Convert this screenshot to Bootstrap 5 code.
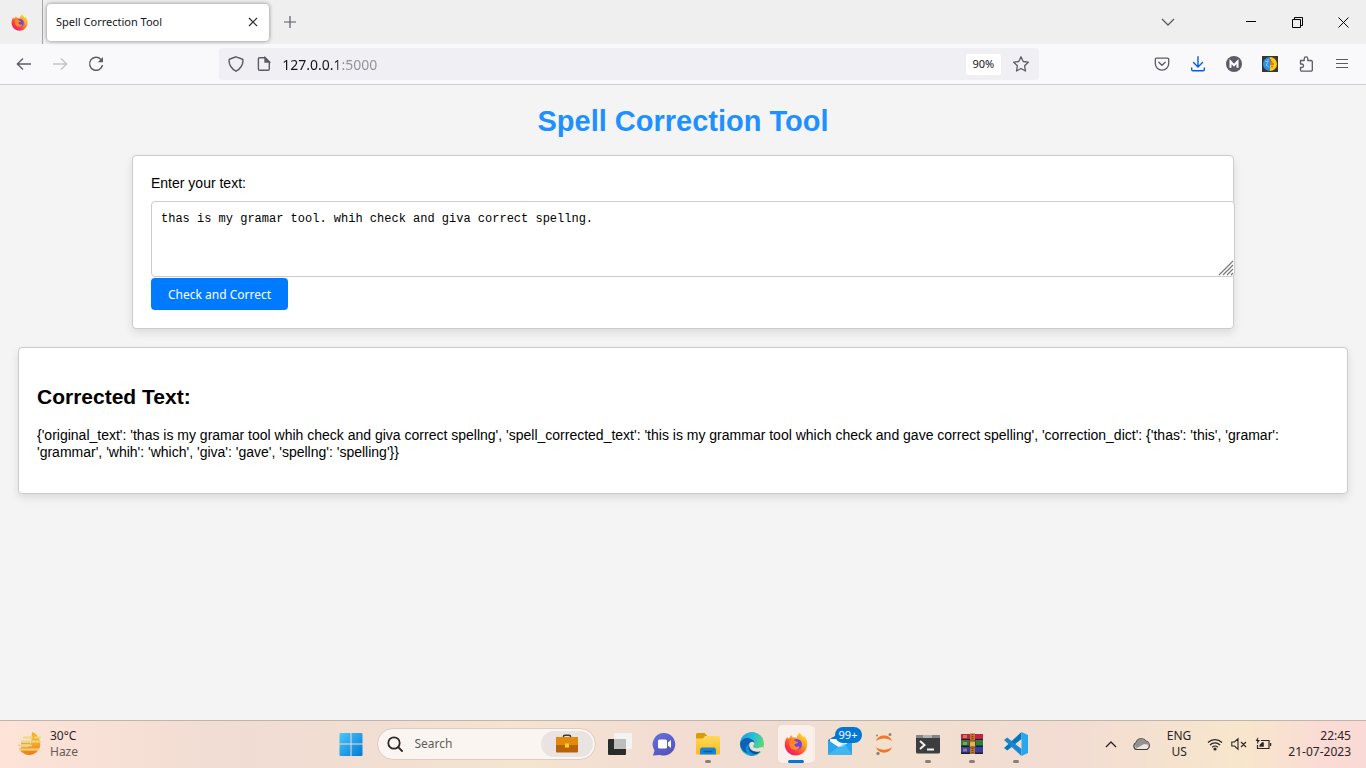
<!DOCTYPE html>
<html lang="en">
<head>
<meta charset="utf-8">
<meta name="viewport" content="width=device-width, initial-scale=1">
<title>Spell Correction Tool</title>
<link href="https://cdn.jsdelivr.net/npm/bootstrap@5.3.0/dist/css/bootstrap.min.css" rel="stylesheet">
<style>
  :root { --ui: "Noto Sans", "Open Sans", sans-serif; --page: "Liberation Sans", Arial, sans-serif; }
  body { font-family: var(--ui); font-size: 12px; line-height: 16px; color: #15141a; background: #f4f4f4; }
  svg { display: block; flex: none; }
  .plain { border: 0; background: none; padding: 0; color: inherit; display: flex; align-items: center; justify-content: center; flex: none; }

  /* browser chrome */
  .tab-strip { height: 44px; background: #efefef; }
  .pinned-tab { width: 43px; border-right: 1px solid #a5a5a8; height: 44px; padding-right: 3px; }
  .open-tab { width: 222px; height: 37px; margin: 0 6px 0 4px; padding: 0 9px; background: #fff; border-radius: 4px; box-shadow: 0 0 4px rgba(0,0,0,.45); font-size: 11px; color: #15141a; }
  .win-btn { width: 46px; height: 44px; }
  .tabs-btn { margin-right: 21px; }
  .tool-bar { height: 41px; padding: 0 6px; background: #f9f9fb; border-bottom: 1px solid #cccccf; color: #5b5b66; }
  .tool-btn { width: 36px; height: 36px; }
  .url-box { width: 60vw; height: 32px; background: #f0f0f4; border-radius: 4px; padding-left: 3px; }
  .url-btn { width: 28px; height: 32px; }
  .url-input { border: 0; outline: 0; padding: 0 0 0 4px; min-width: 0; font-size: 14px; height: 32px;
    background: linear-gradient(to right, #15141a 60px, #8f8f98 60px); -webkit-background-clip: text; background-clip: text; -webkit-text-fill-color: transparent; }
  .zoom-btn { width: 35px; height: 21px; background: #fff; border-radius: 3px; font-size: 11px; color: #15141a; margin-right: 6px; }

  /* web page */
  .web-page { font-family: var(--page); font-size: 14px; line-height: 17px; color: #000; padding: 19px 18px 18px; }
  .web-page h1 { font-size: 29px; line-height: 34px; font-weight: 700; color: #1e90ff; text-align: center; margin: 0 0 17px; }
  .web-page h2 { font-size: 21px; line-height: 25px; font-weight: 700; margin: 18px 0; }
  .web-page label { line-height: 18px; }
  .web-page p { margin: 0 0 14px; }
  .sheet { background: #fff; border: 1px solid #ccc; border-radius: 4px; box-shadow: 0 4px 8px rgba(0,0,0,.1); padding: 18px; }
  .entry-sheet { width: calc(80% + 38px); margin: 0 auto 18px; }
  .entry-area { width: calc(100% + 20px); margin: 9px 0 1px; }
  .entry-area textarea { display: block; width: 100%; height: 76px; padding: 9px; border: 1px solid #ccc; border-radius: 4px; font: 12px/16px "Liberation Mono", monospace; color: #000; resize: none; }
  .grip { right: 1px; bottom: 1px; pointer-events: none; }
  .check-btn { border: 0; border-radius: 4px; background: #007bff; color: #fff; width: 137px; height: 32px; padding: 2px 0 0; font: 12px/16px var(--ui); }

  /* taskbar */
  .task-bar { display: grid; grid-template-columns: 1fr auto 1fr; height: 48px; padding-bottom: 2px; border-top: 1px solid #bfb5ad; color: #2a2524;
    background: linear-gradient(to right, #fde3d8 0, #f0dcd3 18%, #f2dfd2 29%, #f5e4d0 38%, #f3ddd3 48%, #f1dcd2 58%, #f2e0cf 64%, #f2dcd3 78%, #f8e6cc 91%, #fadbd5 97%, #fadad6 100%); }
  .dock-btn { width: 44px; height: 45px; position: relative; }
  .dock-btn.running::after { content: ""; position: absolute; left: 19px; bottom: 3px; width: 6px; height: 3px; border-radius: 2px; background: #8a7d77; }
  .dock-btn.current::before { content: ""; position: absolute; left: 4px; top: 4px; width: 35px; height: 38px; border-radius: 4px; background: #faf0eb; box-shadow: 3px 0 0 -1px #f8eae4, 0 0 1px #cdbdb5; }
  .dock-btn.current::after { left: 14px; width: 16px; background: #0078d4; }
  .dock-btn svg { position: relative; }
  .count-badge { position: absolute; left: 17px; top: 6px; width: 27px; height: 16px; border-radius: 8px; background: #0078d4; color: #fff; font-size: 11px; }
  .search-box { width: 219px; height: 32px; margin: 0 2px 0 4px; padding: 0 2px 0 9px; border-radius: 16px; background: #fbf5f2; border: 1px solid #ddcbc4; }
  .search-box input { border: 0; outline: 0; background: none; min-width: 0; width: 100px; padding: 0; font-size: 12px; }
  .search-box input::placeholder { color: #5f5a58; opacity: 1; }
  .case-btn { width: 52px; height: 26px; border-radius: 13px; background: #e9e4e1; }
  .dim { color: #655c59; }
  .tray { gap: 12px; padding-right: 15px; }
</style>
</head>
<body class="d-flex flex-column min-vh-100">

<header>
  <div class="tab-strip d-flex align-items-center">
    <button class="plain pinned-tab" aria-label="Firefox View"><svg width="17" height="17" viewBox="0 0 24 24"><use href="#fox"/></svg></button>
    <div class="open-tab d-flex align-items-center justify-content-between">
      <span>Spell Correction Tool</span>
      <button class="plain" aria-label="Close tab"><svg width="14" height="14" viewBox="0 0 14 14" stroke="#2b2a33" stroke-width="1.2"><path d="M3 3l8 8M11 3l-8 8"/></svg></button>
    </div>
    <button class="plain" aria-label="New tab"><svg width="30" height="16" viewBox="0 0 30 16" stroke="#5b5b66" stroke-width="1.2"><path d="M15 2v12M9 8h12"/></svg></button>
    <button class="plain ms-auto win-btn tabs-btn" aria-label="List tabs"><svg width="14" height="14" viewBox="0 0 14 14" fill="none" stroke="#5b5b66" stroke-width="1.3"><path d="M1 4l6 6 6-6"/></svg></button>
    <button class="plain win-btn ms-3" aria-label="Minimize"><svg width="10" height="10" viewBox="0 0 10 10" stroke="#000"><path d="M0 4.500h10"/></svg></button>
    <button class="plain win-btn" aria-label="Restore"><svg width="11" height="11" viewBox="0 0 11 11" fill="none" stroke="#000"><path d="M.5 2.500h8v8h-8zM2.500 2.500v-2h8v8h-2"/></svg></button>
    <button class="plain win-btn" aria-label="Close"><svg width="11" height="11" viewBox="0 0 11 11" stroke="#000"><path d="M.5.5l10 10M10.500.5l-10 10"/></svg></button>
  </div>

  <nav class="tool-bar d-flex align-items-center" aria-label="Navigation">
    <button class="plain tool-btn" aria-label="Back"><svg width="16" height="16" viewBox="0 0 16 16" fill="none" stroke="currentColor" stroke-width="1.300"><path d="M15 8H1.500M7 2.500L1.300 8 7 13.500"/></svg></button>
    <button class="plain tool-btn" aria-label="Forward" disabled><svg width="16" height="16" viewBox="0 0 16 16" fill="none" stroke="#c3c3c8" stroke-width="1.300"><path d="M1 8h13.500M9 2.500l5.700 5.500L9 13.500"/></svg></button>
    <button class="plain tool-btn" aria-label="Reload"><svg width="16" height="16" viewBox="0 0 16 16" fill="none" stroke="currentColor" stroke-width="1.400"><path d="M13 3.500A6.500 6.500 0 1 0 14.500 9"/><path d="M15 1v5.200H9.800z" fill="currentColor" stroke="none"/></svg></button>
    <div class="flex-fill"></div>
    <div class="url-box d-flex align-items-center">
      <button class="plain url-btn" aria-label="Tracking protection"><svg width="16" height="16" viewBox="0 0 16 16" fill="none" stroke="currentColor" stroke-width="1.400"><path d="M8 .8l6 2.200c.8.300 1 .8 1 1.600C14.800 9.500 12 13 8 15.200 4 13 1.200 9.500 1 4.600 1 3.800 1.200 3.300 2 3z"/></svg></button>
      <button class="plain url-btn" aria-label="Site information"><svg width="16" height="16" viewBox="0 0 16 16" fill="none" stroke="currentColor" stroke-width="1.400"><path d="M3.700 1.700H9L13.300 6v7a1.300 1.300 0 0 1-1.300 1.300H3.700A1.300 1.300 0 0 1 2.400 13V3a1.300 1.300 0 0 1 1.300-1.300z"/><path d="M9 1.500V6h4.500z" fill="currentColor"/></svg></button>
      <input class="url-input flex-fill" type="text" aria-label="Address" value="127.0.0.1:5000">
      <button class="plain zoom-btn">90%</button>
      <button class="plain url-btn me-1" aria-label="Bookmark this page"><svg width="16" height="16" viewBox="0 0 16 16" fill="none" stroke="currentColor" stroke-width="1.300" stroke-linejoin="round"><path d="M8 .8l2.200 4.700 5.100.7-3.700 3.600.9 5.200L8 12.500 3.500 15l.9-5.200L.7 6.200l5.100-.7z"/></svg></button>
    </div>
    <div class="flex-fill"></div>
    <button class="plain tool-btn" aria-label="Save to Pocket"><svg width="16" height="16" viewBox="0 0 16 16" fill="none" stroke="currentColor" stroke-width="1.300" stroke-linecap="round"><path d="M2.500 2.200h11a1.200 1.200 0 0 1 1.200 1.200V7.500a6.700 6.700 0 0 1-13.400 0V3.400a1.200 1.200 0 0 1 1.200-1.200z"/><path d="M4.800 6.300L8 9.300l3.200-3"/></svg></button>
    <button class="plain tool-btn" aria-label="Downloads"><svg width="16" height="16" viewBox="0 0 16 16" fill="none" stroke="#0061e0" stroke-width="1.400" stroke-linecap="round"><path d="M8 .8V10.500M3.500 6.500L8 11l4.500-4.500M1.700 12v1.500c0 .8.500 1.300 1.300 1.300h10c.8 0 1.300-.5 1.300-1.300V12"/></svg></button>
    <button class="plain tool-btn" aria-label="Account"><svg width="16" height="16" viewBox="0 0 16 16"><circle cx="8" cy="8" r="8" fill="#5b5b66"/><path d="M4.500 11.800V5.500L8 9.300l3.500-3.800v6.300" fill="none" stroke="#fff" stroke-width="2"/></svg></button>
    <button class="plain tool-btn" aria-label="Extension"><svg width="16" height="16" viewBox="0 0 16 16"><path fill="#3c3431" d="M0 0h16v16H0z"/><path d="M8 1a7 7 0 0 0 0 14z" fill="#2f8fe0"/><path d="M8 1a7 7 0 0 1 0 14z" fill="#f6cb12"/><path d="M3 5l3 1-2 3 3 2M6 3v3" stroke="#85c9f5" fill="none"/><path d="M8.500 3v3h2M8 8h4M9 10.500h2" stroke="#d0651a" fill="none" stroke-width="1.300"/></svg></button>
    <button class="plain tool-btn" aria-label="Extensions"><svg width="16" height="16" viewBox="0 0 16 16" fill="none" stroke="currentColor" stroke-width="1.300" stroke-linejoin="round"><path d="M2.500 4.500h3.700V2.700a1.800 1.800 0 0 1 3.600 0v1.800h3.300a1.200 1.200 0 0 1 1.200 1.200v8.200a1.200 1.200 0 0 1-1.200 1.200H3.700a1.200 1.200 0 0 1-1.200-1.200v-2.400h1.300a1.700 1.700 0 0 0 0-3.500H2.500z"/></svg></button>
    <button class="plain tool-btn" aria-label="Menu"><svg width="16" height="16" viewBox="0 0 16 16" stroke="currentColor" stroke-width="1.200"><path d="M2 3.500h12M2 7.500h12M2 11.500h12"/></svg></button>
  </nav>
</header>

<main class="web-page flex-grow-1">
  <h1>Spell Correction Tool</h1>
  <form class="sheet entry-sheet" onsubmit="return false">
    <label class="d-block" for="entry">Enter your text:</label>
    <div class="entry-area position-relative">
      <textarea id="entry" spellcheck="false">thas is my gramar tool. whih check and giva correct spellng.</textarea>
      <svg class="grip position-absolute" width="16" height="16" viewBox="0 0 16 16" stroke="#77777c" stroke-width="1.200"><path d="M1 15L15 1M5 15L15 5M9 15l6-6M13 15l2-2"/></svg>
    </div>
    <button class="check-btn d-block" type="submit">Check and Correct</button>
  </form>
  <section class="sheet">
    <h2>Corrected Text:</h2>
    <p>{'original_text': 'thas is my gramar tool whih check and giva correct spellng', 'spell_corrected_text': 'this is my grammar tool which check and gave correct spelling', 'correction_dict': {'thas': 'this', 'gramar': 'grammar', 'whih': 'which', 'giva': 'gave', 'spellng': 'spelling'}}</p>
  </section>
</main>

<footer class="task-bar align-items-center">
  <button class="plain justify-content-start text-start ps-3 gap-2" aria-label="Weather">
    <svg width="26" height="24" viewBox="0 0 26 24"><path d="M16 0c5 2 8 6 8 11l-9 2z" fill="#f0b429"/><path d="M23.500 8a11 11 0 0 1-20.500 8C10 17 14 15 16 8z" fill="url(#gSun)"/><path d="M8 5.500h8M19 5.500h5M6 9.500h18M3 13.500h12M4 17.500h19" stroke="#f0d57c" stroke-width="2" stroke-linecap="round"/><path d="M5 11.500h9M5 15.500h7" stroke="#e6a83c" stroke-width="1.500"/></svg>
    <span class="d-block"><span class="d-block">30°C</span><span class="d-block dim">Haze</span></span>
  </button>

  <div class="d-flex align-items-center">
    <button class="plain dock-btn" aria-label="Start"><svg width="24" height="24" viewBox="0 0 24 24" fill="url(#gWin)"><path d="M.5 2a1 1 0 0 1 1-1h10v10.500H.5zM12.500 1h10a1 1 0 0 1 1 1v9.500h-11zM.5 12.500h11V24h-10a1 1 0 0 1-1-1zM12.500 12.500h11V23a1 1 0 0 1-1 1h-10z"/></svg></button>
    <div class="search-box d-flex align-items-center">
      <svg width="16" height="16" viewBox="0 0 16 16" fill="none" stroke="#2a2726" stroke-width="1.800" stroke-linecap="round"><circle cx="7" cy="7" r="5.700"/><path d="M11.200 11.200L15 15"/></svg>
      <input class="ms-2 ps-1 me-auto" type="text" placeholder="Search" aria-label="Search">
      <button class="plain case-btn" aria-label="Search highlights"><svg width="22" height="19" viewBox="0 0 22 19"><path d="M7.500 4V2.500c0-.8.500-1.300 1.300-1.300h4.400c.8 0 1.300.5 1.300 1.300V4" fill="none" stroke="#3b3b3f" stroke-width="1.600"/><rect y="3" width="22" height="15.500" rx="1" fill="#b96208"/><path d="M0 4a1 1 0 0 1 1-1h20a1 1 0 0 1 1 1v7H0z" fill="#e38a0d"/><path d="M9 9.500h4v4H9z" fill="#ffd321"/></svg></button>
    </div>
    <button class="plain dock-btn" aria-label="Task view"><svg width="24" height="24" viewBox="0 0 24 24"><rect x="0" y="7" width="18" height="16" rx="1" fill="#2b2b2b"/><rect x="6" y="1" width="18" height="16" rx="1" fill="#f3f3f3"/><path d="M6 7h12v10H6z" fill="#bdbdbd"/></svg></button>
    <button class="plain dock-btn" aria-label="Chat"><svg width="24" height="24" viewBox="0 0 24 24"><path d="M12 1a11.300 11.300 0 1 1-4 21.900L1 23.500l1.500-5A11.300 11.300 0 0 1 12 1z" fill="url(#gChat)"/><rect x="6" y="7.500" width="9" height="9" rx="1.500" fill="#fff"/><path d="M16 10.500l3-2.500v8l-3-2.500z" fill="#fff"/></svg></button>
    <button class="plain dock-btn running" aria-label="File Explorer"><svg width="24" height="24" viewBox="0 0 24 24"><path d="M0 2.500A1.500 1.500 0 0 1 1.500 1h7L11 3.500V8H0z" fill="#d89b0a"/><path d="M9 4h13.500A1.500 1.500 0 0 1 24 5.500V21a1.500 1.500 0 0 1-1.500 1.500h-21A1.500 1.500 0 0 1 0 21V6.500h7z" fill="url(#gFold)"/><path d="M4 22.500V18a2.500 2.500 0 0 1 2.500-2.500h11A2.500 2.500 0 0 1 20 18v4.500z" fill="#1384d6"/><path d="M7.500 19.500h9" stroke="#0c5c9f" stroke-width="1.500"/></svg></button>
    <button class="plain dock-btn" aria-label="Edge"><svg width="24" height="24" viewBox="0 0 24 24"><circle cx="12" cy="12" r="12" fill="url(#gEdge)"/><path d="M0 12C1 7 6 5 10 6.500c3 1 4.500 3 4.500 4.500-2-2-5-1-5.500 2-.6 5 4.500 8.500 11 6.500A12 12 0 0 1 0 12z" fill="#0d62b5"/><path d="M9.200 12c-1 5 4 9 11.200 7.100A12 12 0 0 1 11 24C4.500 21 4.500 14 9.200 12z" fill="#1490df"/><path d="M14 10.500c1 2-1 2.500-.8 4 .2 1.800 4.500 2.700 9.300.3l2 3-4 2.500C14 21 8.500 17 9.200 12.500c.5-2.500 3.300-3.500 4.800-2z" fill="#f3ddd3"/><path d="M20.500 19.200C13.500 21.500 8 17 9.200 12.300c-2 4 .3 8.700 5.300 9.700 2.500.3 4.600-1 6-2.800z" fill="#0b4f95"/></svg></button>
    <button class="plain dock-btn running current" aria-label="Firefox"><svg width="24" height="24" viewBox="0 0 24 24"><use href="#fox"/></svg></button>
    <button class="plain dock-btn" aria-label="Mail, 99+ unread"><svg width="24" height="24" viewBox="0 0 24 24"><path d="M0 8l12-7 12 7v14.500H0z" fill="#1273c4"/><path d="M2 7h20v8H2z" fill="#fff"/><path d="M0 8l12 8 12-8v14.500H0z" fill="#2aa4ec"/><path d="M0 22.500L16 11l8 11.500z" fill="#50c4f8" opacity=".6"/></svg><span class="count-badge">99+</span></button>
    <button class="plain dock-btn" aria-label="Jupyter"><svg width="24" height="24" viewBox="0 0 24 24"><path d="M4 9C6 1.500 18 1.500 20 9 16 5.500 8 5.500 4 9zM4 15c2 7.500 14 7.500 16 0-4 3.500-12 3.500-16 0z" fill="#f37726"/><g fill="#8b8583"><circle cx="18" cy="2.500" r="1.500"/><circle cx="5" cy="3.500" r="1"/><circle cx="6" cy="21.500" r="1.700"/></g></svg></button>
    <button class="plain dock-btn running" aria-label="Terminal"><svg width="24" height="24" viewBox="0 0 24 24"><rect y="3" width="24" height="18.500" rx="1.500" fill="#3d3d3f"/><path d="M0 4.500A1.500 1.500 0 0 1 1.500 3h21A1.500 1.500 0 0 1 24 4.500V6H0z" fill="#858587"/><path d="M7 3h9v3H7z" fill="#b1b1b3"/><path d="M4 9l4.500 4L4 17M11 17.500h7" fill="none" stroke="#f1f1f1" stroke-width="2"/></svg></button>
    <button class="plain dock-btn running" aria-label="WinRAR"><svg width="24" height="24" viewBox="0 0 24 24"><path d="M1 2h22v6H1z" fill="#bd2446"/><path d="M1 8.500h22v6H1z" fill="#25833c"/><path d="M1 15h22v6.500H1z" fill="#3341a0"/><path d="M1 7h22v1.500H1zM1 13.500h22V15H1zM1 20.500h22V22H1z" fill="#241a2e"/><path d="M4 3v3M6 3v3M4 10v3M6 10v3M4 16.500v3M6 16.500v3" stroke="#e6c35c"/><path d="M10 1.500h5V22h-5z" fill="#bb7430"/><rect x="9.500" y="9" width="6" height="6" fill="#e0b25a" stroke="#65401c"/><path d="M12.500 2v6M12.500 16v5" stroke="#774313" stroke-dasharray="1 1" stroke-width="2"/></svg></button>
    <button class="plain dock-btn running" aria-label="Visual Studio Code"><svg width="24" height="24" viewBox="0 0 24 24"><path d="M17.500 0v7L3.300 18.500 0 16z" fill="#0877b9"/><path d="M0 8l3.300-2.500L17.500 17v7z" fill="#1688d0"/><path d="M17.500 0L24 3v18l-6.500 3z" fill="#27a7ee"/></svg></button>
  </div>

  <div class="tray d-flex align-items-center justify-content-end">
    <button class="plain me-1" aria-label="Hidden icons"><svg width="12" height="12" viewBox="0 0 12 12" fill="none" stroke="#2a2524" stroke-width="1.300"><path d="M1 9l5-5 5 5"/></svg></button>
    <button class="plain me-1" aria-label="OneDrive"><svg width="18" height="16" viewBox="0 0 18 16"><path d="M4.500 13.500A3.500 3.500 0 0 1 3 6.800 5.500 5.500 0 0 1 12.700 5 4.600 4.600 0 0 1 14 13.500z" fill="#e9e7e6" stroke="#3c3838" stroke-width="1.200"/><path d="M3 7.200A5.200 5.200 0 0 1 12.500 5.200a4.500 4.500 0 0 1 4 3.800L11 8l-7 4C1.500 11 1.500 8 3 7.200z" fill="#949190"/></svg></button>
    <button class="plain text-center me-1" aria-label="Language"><span>ENG<br>US</span></button>
    <button class="plain gap-2 me-1" aria-label="Network, sound and battery">
      <svg width="16" height="14" viewBox="0 0 16 14" fill="none" stroke="#2a2524" stroke-width="1.200"><path d="M1 5.500a10 10 0 0 1 14 0M3 8a7 7 0 0 1 10 0M5.200 10.200a4 4 0 0 1 5.600 0"/><circle cx="8" cy="12" r="1" fill="#2a2524"/></svg>
      <svg width="16" height="14" viewBox="0 0 16 14" fill="none" stroke="#2a2524" stroke-width="1.100"><path d="M.8 5h2.700L7 1.800v10.400L3.500 9H.8zM10 5l5 5M15 5l-5 5"/></svg>
      <svg width="17" height="14" viewBox="0 0 17 14" fill="none" stroke="#2a2524" stroke-width="1.200"><path d="M6 3.500h8v8H2.500V8"/><path d="M4.500 9.800V8L7 5.300h1.800v4.500zM15 6h1.200v3H15z" fill="#2a2524" stroke="none"/><path d="M3.200 0L.6 4h1.800l-.6 3.500L5 3H3z" fill="#2a2524" stroke="none"/></svg>
    </button>
    <button class="plain text-end" aria-label="Clock"><span>22:45<br>21-07-2023</span></button>
  </div>
</footer>

<svg width="0" height="0" class="position-absolute" aria-hidden="true">
  <defs>
    <linearGradient id="gFox" x1="1" y1="0" x2=".2" y2="1"><stop offset=".1" stop-color="#ffe226"/><stop offset=".45" stop-color="#ff9422"/><stop offset=".75" stop-color="#ff3c3f"/><stop offset="1" stop-color="#e4127c"/></linearGradient>
    <linearGradient id="gWin" gradientUnits="userSpaceOnUse" x1="0" y1="0" x2="24" y2="24"><stop offset="0" stop-color="#4dcbfb"/><stop offset="1" stop-color="#0377d6"/></linearGradient>
    <linearGradient id="gSun" x1=".4" y1="0" x2=".5" y2="1"><stop offset="0" stop-color="#f4b93a"/><stop offset="1" stop-color="#ee7a17"/></linearGradient>
    <linearGradient id="gChat" x1="0" y1="0" x2=".6" y2="1"><stop offset="0" stop-color="#6571da"/><stop offset="1" stop-color="#5553bc"/></linearGradient>
    <linearGradient id="gFold" x1="0" y1="0" x2="0" y2="1"><stop offset="0" stop-color="#ffd95e"/><stop offset="1" stop-color="#fbba18"/></linearGradient>
    <linearGradient id="gEdge" x1="0" y1=".2" x2="1" y2=".6"><stop offset="0" stop-color="#1a9fe0"/><stop offset=".5" stop-color="#2bbfd5"/><stop offset="1" stop-color="#5fdd6b"/></linearGradient>
    <g id="fox">
      <path d="M16 .5c.5 2 2.500 3.500 3.500 5l.8-1.500C23 7 23.800 11 23 14.500 21.800 20 17.500 23.500 12 23.500 5.500 23.500.8 18.500.8 12.500c0-3 1-6 2.700-7.800l.3 2.300C4.500 6 5.500 5.500 6 5.400L7 3l1.500 2.500c1.500-.3 3-.2 4 .4C13 3.500 14.500 1.500 16 .5z" fill="url(#gFox)"/>
      <circle cx="12.500" cy="12.500" r="5.500" fill="#7542e5"/>
      <path d="M6.500 8.500c2-1.200 4.500-.5 5.500 1l2 .5c0 1.500-3 1.500-3.500 2.500-.4 2 2.500 3 4.500 1.800 1.200 1.200-.5 3.700-3 3.700-4 0-6.500-3-6.500-6 0-1.500.3-2.500 1-3.500z" fill="#ff8a25"/>
    </g>
  </defs>
</svg>
<script src="https://cdn.jsdelivr.net/npm/bootstrap@5.3.0/dist/js/bootstrap.bundle.min.js"></script>
</body>
</html>
